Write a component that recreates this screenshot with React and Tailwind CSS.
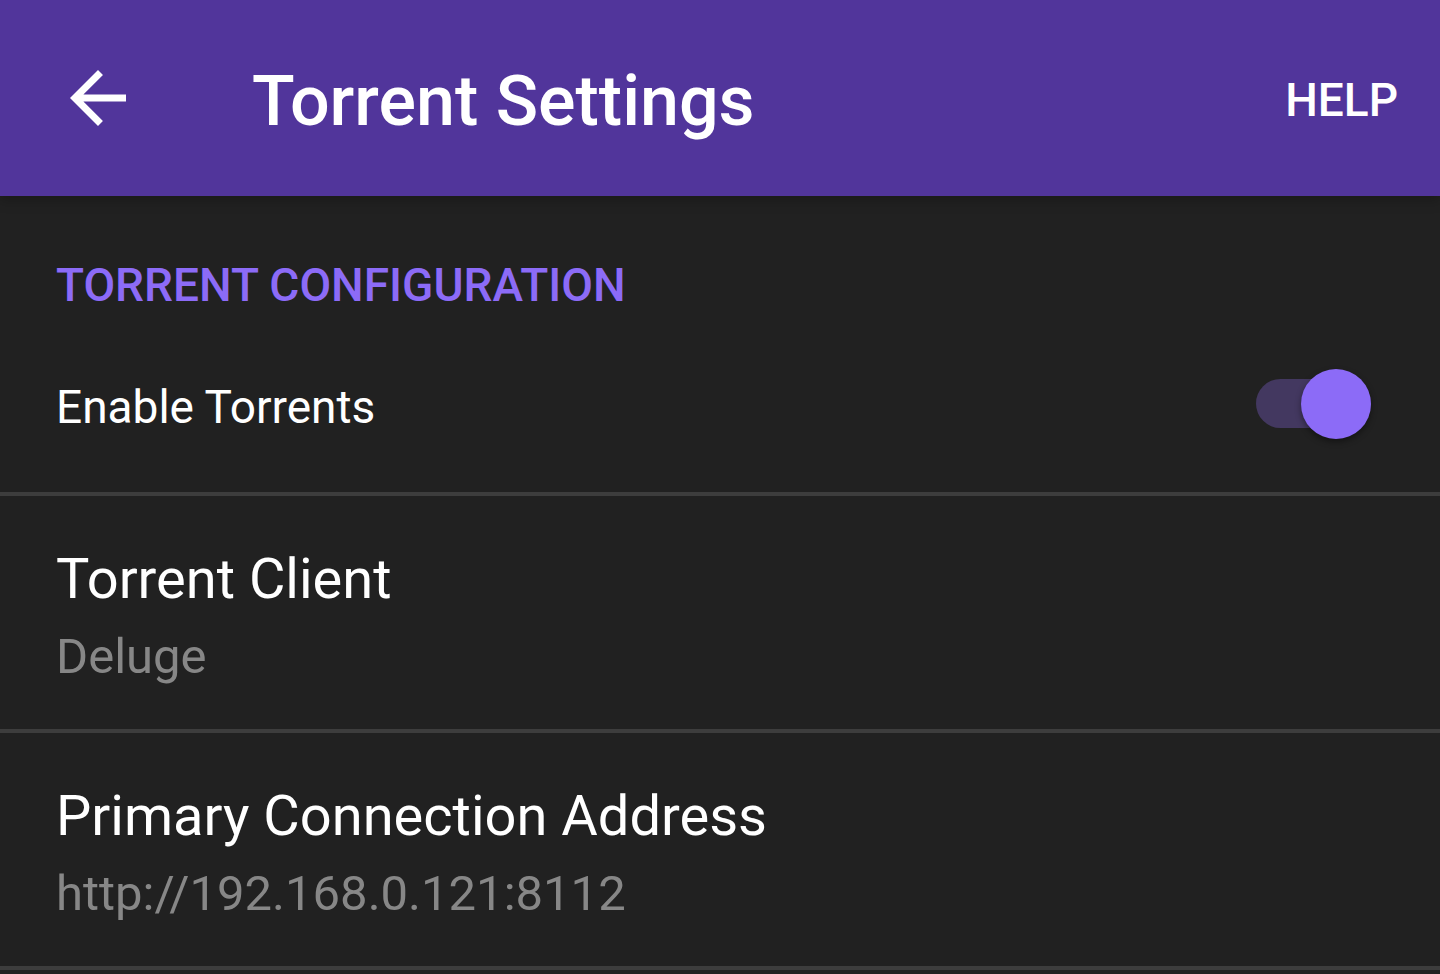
function Row({ title, value }) {
  return (
    <li className="border-b-4 border-[#3d3d3d]">
      <button type="button" className="flex h-[233px] w-full flex-col items-start justify-center pt-2 pl-14 text-left">
        <span className="text-[56px] leading-[80px] text-white">{title}</span>
        <span className="text-[49px] leading-[76px] text-[#878787]">{value}</span>
      </button>
    </li>
  );
}

export default function App() {
  return (
    <div className="min-h-screen bg-[#212121] font-['Roboto',sans-serif]">
      <header className="relative flex h-[196px] items-center bg-[#51359b] pr-[42px] pl-14 text-white shadow-[0_4px_12px_rgba(0,0,0,0.25)]">
        <button type="button" aria-label="Back" className="flex size-[84px] items-center justify-center">
          <svg viewBox="0 0 24 24" className="size-[84px]" fill="currentColor" aria-hidden="true">
            <path d="M20 11H7.83l5.59-5.59L12 4l-8 8 8 8 1.41-1.41L7.83 13H20v-2z" />
          </svg>
        </button>
        <h1 className="ml-28 pt-1.5 text-[70px] leading-[84px] font-medium">Torrent Settings</h1>
        <button type="button" className="ml-auto pt-1 text-[46px] leading-[56px] font-medium">HELP</button>
      </header>
      <main>
        <h2 className="px-14 pt-[61px] text-[46px] leading-[56px] font-medium text-[#8c6bf7]">TORRENT CONFIGURATION</h2>
        <label className="flex h-[183px] cursor-pointer items-center justify-between border-b-4 border-[#3d3d3d] pt-0.5 pr-[69px] pl-14">
          <span className="pt-1.5 text-[46px] leading-[56px] text-white">Enable Torrents</span>
          <input
            type="checkbox"
            role="switch"
            defaultChecked
            className="flex h-[49px] w-[115px] shrink-0 cursor-pointer appearance-none items-center rounded-full bg-[#433860] before:size-[70px] before:shrink-0 before:rounded-full before:bg-[#8c6bf7] before:shadow-[0_3px_6px_rgba(0,0,0,0.4)] before:content-[''] checked:justify-end"
          />
        </label>
        <ul>
          <Row title="Torrent Client" value="Deluge" />
          <Row title="Primary Connection Address" value="http://192.168.0.121:8112" />
        </ul>
      </main>
    </div>
  );
}
